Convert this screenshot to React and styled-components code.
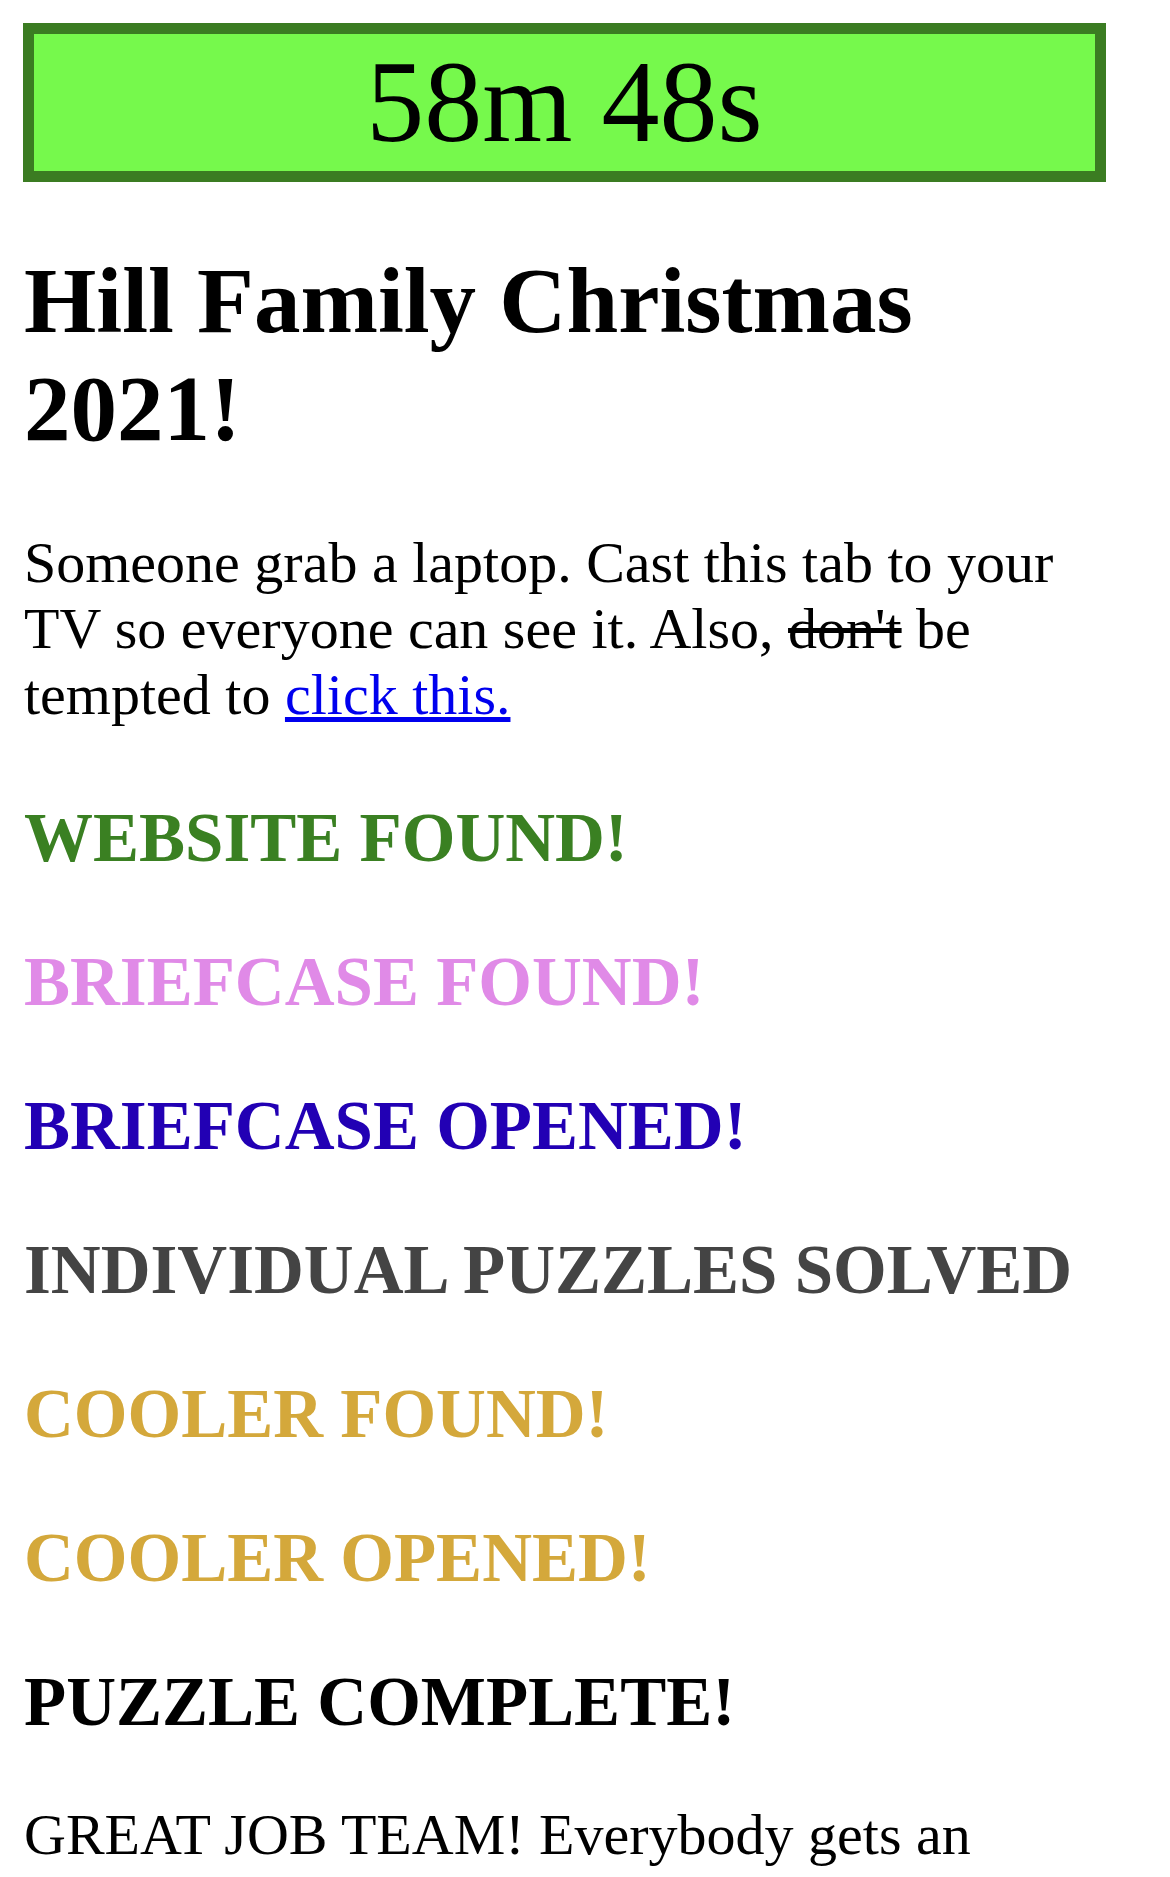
import React from "react";
import styled, { createGlobalStyle } from "styled-components";

const GlobalStyle = createGlobalStyle`
  html, body {
    margin: 0;
    padding: 0;
    background: #ffffff;
  }
  body {
    font-family: "Liberation Serif", "Times New Roman", serif;
    color: #000000;
  }
`;

const Page = styled.div`
  width: 1083px;
  padding: 23px 24px 0 23px;
`;

const Timer = styled.div`
  border: 11px solid #3b7c22;
  background: #76f94c;
  height: 137px;
  line-height: 137px;
  font-size: 116px;
  text-align: center;
  white-space: nowrap;
`;

const Title = styled.h1`
  font-size: 93px;
  line-height: 108px;
  font-weight: bold;
  margin: 65px 0 67px 1px;
`;

const Para = styled.p`
  font-size: 58px;
  line-height: 66px;
  margin: 58px 0 0 1px;
`;

const Intro = styled(Para)`
  margin: 0 0 68px 1px;
`;

const Link = styled.a`
  color: #0000ee;
  text-decoration: underline;
`;

const Struck = styled.s`
  text-decoration: line-through;
`;

const Status = styled.h2`
  font-size: 69px;
  line-height: 84px;
  font-weight: bold;
  margin: 60px 0 0 1px;
  color: ${(p) => p.$color};
  &:first-of-type {
    margin-top: 0;
  }
`;

const steps = [
  { text: "WEBSITE FOUND!", color: "#3a8022" },
  { text: "BRIEFCASE FOUND!", color: "#e08ae7" },
  { text: "BRIEFCASE OPENED!", color: "#2200b4" },
  { text: "INDIVIDUAL PUZZLES SOLVED", color: "#444444" },
  { text: "COOLER FOUND!", color: "#d4a83b" },
  { text: "COOLER OPENED!", color: "#d4a83b" },
  { text: "PUZZLE COMPLETE!", color: "#000000" },
];

export default function App() {
  return (
    <>
      <GlobalStyle />
      <Page>
        <Timer>58m 48s</Timer>
        <Title>Hill Family Christmas 2021!</Title>
        <Intro>
          Someone grab a laptop. Cast this tab to your TV so everyone can see
          it. Also, <Struck>don't</Struck> be tempted to{" "}
          <Link href="#">click this.</Link>
        </Intro>
        {steps.map((s) => (
          <Status key={s.text} $color={s.color}>
            {s.text}
          </Status>
        ))}
        <Para>GREAT JOB TEAM! Everybody gets an</Para>
      </Page>
    </>
  );
}
